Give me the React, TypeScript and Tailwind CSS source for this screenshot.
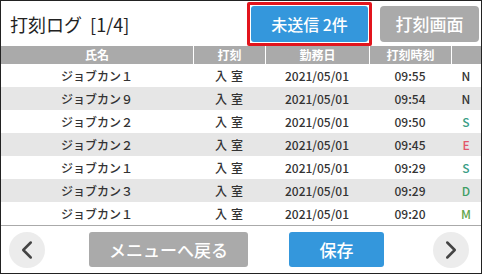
import { ChevronLeft, ChevronRight } from "lucide-react";

type Row = { name: string; kind: string; date: string; time: string; st: string; stColor: string };

const rows: Row[] = [
  { name: "ジョブカン１", kind: "入室", date: "2021/05/01", time: "09:55", st: "N", stColor: "text-[#333333]" },
  { name: "ジョブカン９", kind: "入室", date: "2021/05/01", time: "09:54", st: "N", stColor: "text-[#333333]" },
  { name: "ジョブカン２", kind: "入室", date: "2021/05/01", time: "09:50", st: "S", stColor: "text-[#3a9e86]" },
  { name: "ジョブカン２", kind: "入室", date: "2021/05/01", time: "09:45", st: "E", stColor: "text-[#e2566a]" },
  { name: "ジョブカン１", kind: "入室", date: "2021/05/01", time: "09:29", st: "S", stColor: "text-[#3a9e86]" },
  { name: "ジョブカン３", kind: "入室", date: "2021/05/01", time: "09:29", st: "D", stColor: "text-[#3f9e64]" },
  { name: "ジョブカン１", kind: "入室", date: "2021/05/01", time: "09:20", st: "M", stColor: "text-[#5fa44a]" },
];

const cols = "grid grid-cols-[192px_72px_104px_82px_1fr]";

export default function App() {
  return (
    <div
      className="flex h-[274px] w-[482px] flex-col border border-[#222222] bg-white text-[#333333]"
      style={{ fontFamily: '"Noto Sans CJK JP", "Noto Sans", sans-serif' }}
    >
      {/* ヘッダー */}
      <div className="flex h-[45px] shrink-0 items-center">
        <h1 className="pl-[9px] text-[18px] leading-none text-[#222222]">打刻ログ&nbsp;&nbsp;[1/4]</h1>
        <div className="ml-auto rounded-[2px] border-[3px] border-[#e2141c] p-px">
          <button className="flex h-[36px] w-[117px] items-center justify-center rounded-[3px] bg-[#3497dc] text-[16px] font-medium text-white">
            未送信 2件
          </button>
        </div>
        <button className="mr-[2px] ml-[8px] flex h-[36px] w-[99px] items-center justify-center rounded-[4px] bg-[#aaaaaa] text-[17px] font-medium text-white">
          打刻画面
        </button>
      </div>

      {/* テーブル */}
      <div className={`${cols} h-[18px] shrink-0 bg-[#aaaaaa] text-[12px] font-bold leading-[18px] text-white`}>
        <div className="text-center">氏名</div>
        <div className="border-l border-white text-center">打刻</div>
        <div className="border-l border-white text-center">勤務日</div>
        <div className="border-l border-white text-center">打刻時刻</div>
        <div className="border-l border-white" />
      </div>
      <div className="flex flex-col">
        {rows.map((r, i) => (
          <div
            key={i}
            className={`${cols} h-[23px] items-center text-[12px] font-medium ${i % 2 === 1 ? "bg-[#e6e6e6]" : "bg-white"}`}
          >
            <div className="text-center">{r.name}</div>
            <div className="pl-[4px] text-center tracking-[4px]">{r.kind}</div>
            <div className="text-center">{r.date}</div>
            <div className="text-center">{r.time}</div>
            <div className={`text-center ${r.stColor}`}>{r.st}</div>
          </div>
        ))}
      </div>

      {/* フッター */}
      <div className="flex flex-1 items-center border-t border-[#aaaaaa] pl-[8px]">
        <button className="flex size-[36px] items-center justify-center rounded-full bg-[#ececec] text-[#444444]">
          <ChevronLeft className="size-[30px]" strokeWidth={2} />
        </button>
        <button className="ml-[44px] flex h-[35px] w-[159px] items-center justify-center rounded-[3px] bg-[#aaaaaa] text-[17px] font-medium text-white">
          メニューへ戻る
        </button>
        <button className="ml-[41px] flex h-[35px] w-[95px] items-center justify-center rounded-[3px] bg-[#3497dc] text-[17px] font-medium text-white">
          保存
        </button>
        <button className="ml-[49px] flex size-[36px] items-center justify-center rounded-full bg-[#ececec] text-[#444444]">
          <ChevronRight className="size-[30px]" strokeWidth={2} />
        </button>
      </div>
    </div>
  );
}
